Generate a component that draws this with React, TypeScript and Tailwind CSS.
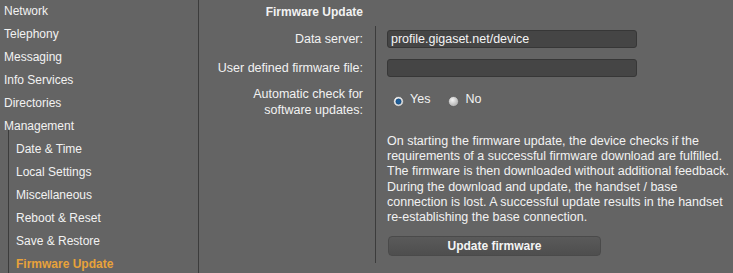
import React from "react";

const mainItems = ["Network", "Telephony", "Messaging", "Info Services", "Directories", "Management"];
const subItems = ["Date & Time", "Local Settings", "Miscellaneous", "Reboot & Reset", "Save & Restore"];

function Radio({ checked }: { checked: boolean }) {
  const id = checked ? "rg1" : "rg0";
  return (
    <svg width="11" height="11" viewBox="0 0 12 12" className="shrink-0">
      <defs>
        <radialGradient id={id} cx="0.4" cy="0.35" r="0.7">
          <stop offset="0" stopColor={checked ? "#ffffff" : "#f4f4f4"} />
          <stop offset="1" stopColor={checked ? "#c8c8c8" : "#a8a8a8"} />
        </radialGradient>
      </defs>
      <circle cx="6" cy="6" r="5.5" fill={`url(#${id})`} stroke="#5a5a5a" strokeWidth="0.8" />
      {checked && <circle cx="6" cy="6" r="2.9" fill="#1f5f9a" stroke="#0e3a66" strokeWidth="0.6" />}
    </svg>
  );
}

export default function App() {
  return (
    <div
      className="w-[733px] h-[273px] bg-[#646464] flex overflow-hidden text-[12px] text-[#f2f2f2]"
      style={{ fontFamily: '"Liberation Sans", Arial, sans-serif' }}
    >
      {/* Sidebar */}
      <div className="w-[199px] shrink-0 border-r border-[#3c3c3c] h-full">
        {mainItems.map((t) => (
          <div key={t} className="h-[23px] leading-[23px] pl-1 whitespace-nowrap">
            {t}
          </div>
        ))}
        <div className="ml-2 border-l border-[#3c3c3c] mt-[-11px] pt-[11px]">
          {subItems.map((t) => (
            <div key={t} className="h-[23px] leading-[23px] pl-[7px] whitespace-nowrap">
              {t}
            </div>
          ))}
          <div className="h-[23px] leading-[23px] pl-[7px] whitespace-nowrap font-bold text-[#e8a23a]">
            Firmware Update
          </div>
        </div>
      </div>

      {/* Main */}
      <div className="flex-1 flex flex-col">
        <div className="h-[26px] flex">
          <div className="w-[176px] text-right pr-3 pt-[5px] font-bold leading-[14px]">Firmware Update</div>
        </div>
        <div className="grid grid-cols-[176px_1fr] text-[12.5px]">
          {/* Row 1 */}
          <div className="h-[26px] flex items-center justify-end pr-3 leading-[16px]">Data server:</div>
          <div className="border-l border-[#3c3c3c] pl-[11px] pt-[4px] h-[26px]">
            <div className="w-[250px] h-[18px] rounded-[3px] bg-[#454545] border border-[#373737] px-[3px] leading-[16px] text-[#f4f4f4]">
              profile.gigaset.net/device
            </div>
          </div>

          {/* Row 2 */}
          <div className="h-[32px] flex items-center justify-end pr-3 leading-[16px]">User defined firmware file:</div>
          <div className="border-l border-[#3c3c3c] pl-[11px] pt-[7px] h-[32px]">
            <div className="w-[250px] h-[18px] rounded-[3px] bg-[#454545] border border-[#373737]" />
          </div>

          {/* Row 3 */}
          <div className="h-[38px] pt-[2px] text-right pr-3 leading-[16px]">
            <div>Automatic check for</div>
            <div>software updates:</div>
          </div>
          <div className="border-l border-[#3c3c3c] pl-[17px] pt-[10px] h-[38px]">
            <div className="flex items-center h-[14px]">
              <Radio checked />
              <span className="ml-[6px] leading-[14px] -mt-[4px]">Yes</span>
              <span className="ml-[18px] flex items-center">
                <Radio checked={false} />
              </span>
              <span className="ml-[6px] leading-[14px] -mt-[4px]">No</span>
            </div>
          </div>

          {/* Row 4 */}
          <div />
          <div className="border-l border-[#3c3c3c] pl-[11px] pt-[12px] pb-[7px]">
            <p className="leading-[15.2px] w-[342px]">
              On starting the firmware update, the device checks if the requirements of a successful firmware download are
              fulfilled. The firmware is then downloaded without additional feedback. During the download and update, the
              handset / base connection is lost. A successful update results in the handset re-establishing the base
              connection.
            </p>
            <button className="block mt-[11px] ml-px w-[213px] h-[20px] rounded-[4px] border border-[#4a4a4a] bg-gradient-to-b from-[#5a5a5a] to-[#4e4e4e] font-bold text-[12px] text-[#f4f4f4] leading-[18px]">
              Update firmware
            </button>
          </div>
        </div>
      </div>
    </div>
  );
}
